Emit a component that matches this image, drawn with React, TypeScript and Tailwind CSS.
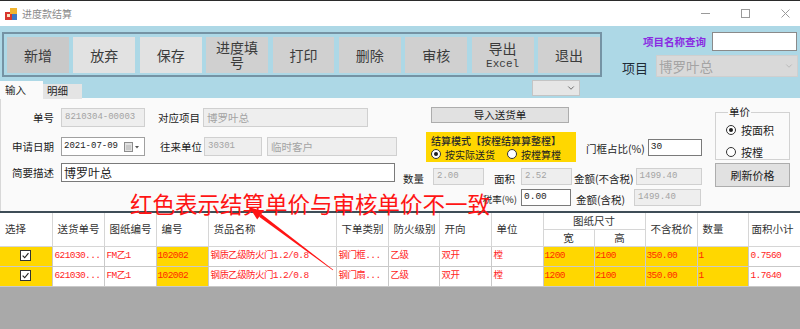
import { ChevronDown } from 'lucide-react';

const mono = "font-['Liberation_Mono','Noto_Sans_CJK_SC',monospace]";

const tools = [
  { key: 'add', label: '新增', bg: 'bg-[#c9c9c9]' },
  { key: 'drop', label: '放弃', bg: 'bg-[#e2e2e2]' },
  { key: 'save', label: '保存', bg: 'bg-[#e2e2e2]' },
  { key: 'fill', label: '进度填|号', bg: 'bg-[#d0d0d0]' },
  { key: 'print', label: '打印', bg: 'bg-[#d0d0d0]' },
  { key: 'del', label: '删除', bg: 'bg-[#d0d0d0]' },
  { key: 'audit', label: '审核', bg: 'bg-[#d0d0d0]' },
  { key: 'excel', label: '导出', bg: 'bg-[#d0d0d0]', sub: 'Excel' },
  { key: 'exit', label: '退出', bg: 'bg-[#d0d0d0]' }
];

type Cell = { text: string; yellow?: boolean; check?: boolean };

const rows: Cell[][] = [
  [
    { text: '', yellow: true, check: true },
    { text: '621030...' },
    { text: 'FM乙1' },
    { text: '102002', yellow: true },
    { text: '钢质乙级防火门1.2/0.8' },
    { text: '钢门框...' },
    { text: '乙级' },
    { text: '双开' },
    { text: '樘' },
    { text: '1200', yellow: true },
    { text: '2100', yellow: true },
    { text: '350.00', yellow: true },
    { text: '1', yellow: true },
    { text: '0.7560' }
  ],
  [
    { text: '', yellow: true, check: true },
    { text: '621030...' },
    { text: 'FM乙1' },
    { text: '102002', yellow: true },
    { text: '钢质乙级防火门1.2/0.8' },
    { text: '钢门扇...' },
    { text: '乙级' },
    { text: '双开' },
    { text: '樘' },
    { text: '1200', yellow: true },
    { text: '2100', yellow: true },
    { text: '350.00', yellow: true },
    { text: '1', yellow: true },
    { text: '1.7640' }
  ]
];

const headLeft = ['选择', '送货单号', '图纸编号', '编号', '货品名称', '下单类别', '防火级别', '开向', '单位'];

function AppIcon() {
  return (
    <svg width="12" height="12" viewBox="0 0 12 12">
      <rect x="0" y="4" width="7" height="8" fill="#d8352c" />
      <rect x="5" y="0" width="7" height="6" fill="#f1b42f" />
      <rect x="7" y="6" width="5" height="6" fill="#3c78c6" />
      <rect x="2" y="6" width="3" height="3" fill="#fbe3c0" />
    </svg>
  );
}

function Radio({ on }: { on?: boolean }) {
  return (
    <span className="flex h-[10px] w-[10px] shrink-0 items-center justify-center rounded-full border border-[#333] bg-white">
      {on && <span className="h-[4px] w-[4px] rounded-full bg-[#1e1e1e]" />}
    </span>
  );
}

function CheckBox() {
  return (
    <span className="inline-flex h-[11px] w-[11px] items-center justify-center border border-[#333] bg-white align-middle">
      <svg viewBox="0 0 10 10" className="h-[9px] w-[9px]">
        <path d="M1.8 5.2 L4.1 7.5 L8.3 2.4" fill="none" stroke="#222" strokeWidth="1.3" />
      </svg>
    </span>
  );
}

function ReadOnly({ className, children, monoText }: { className: string; children: string; monoText?: boolean }) {
  return (
    <div
      className={`flex h-[19px] items-center border border-[#d0d0d0] bg-[#eeeeee] pl-[3px] text-[#a3a3a3] ${
        monoText ? `${mono} text-[9px]` : 'text-[10.5px]'
      } ${className}`}
    >
      {children}
    </div>
  );
}

export default function App() {
  return (
    <div className="relative h-[329px] w-[800px] overflow-hidden bg-white font-['Noto_Sans_CJK_SC',sans-serif] text-[#222]">
      {/* title bar */}
      <div className="flex h-[26px] items-center border-t border-[#2b2b2b] bg-white">
        <span className="ml-[5px]">
          <AppIcon />
        </span>
        <span className="ml-[5px] text-[10px] text-[#8a8a8a]">进度款结算</span>
        <div className="ml-auto flex items-center gap-[31px] pr-[10px] text-[#9a9a9a]">
          <svg width="9" height="9">
            <path d="M0 4.5H9" stroke="currentColor" />
          </svg>
          <svg width="9" height="9">
            <rect x="0.5" y="0.5" width="8" height="8" fill="none" stroke="currentColor" />
          </svg>
          <svg width="9" height="9">
            <path d="M0.5 0.5L8.5 8.5M8.5 0.5L0.5 8.5" stroke="currentColor" />
          </svg>
        </div>
      </div>

      {/* blue header */}
      <div className="h-[72px] bg-[#add8e6]">
        <div className="flex pt-[6px]">
          <div className="ml-[2px] flex h-[45px] w-[600px] gap-[4.4px] border-2 border-[#7593a4] pl-[3px] pt-[3px]">
            {tools.map((tool) => (
              <div
                key={tool.key}
                className={`flex h-[36px] w-[62px] flex-col items-center justify-center text-[14px] leading-[15px] text-[#3b3b3b] ${tool.bg}`}
              >
                {tool.label.split('|').map((part) => (
                  <span key={part}>{part}</span>
                ))}
                {tool.sub && <span className={`${mono} mt-[2px] text-[11px] leading-[12px]`}>{tool.sub}</span>}
              </div>
            ))}
          </div>
          <div className="ml-[20px] flex w-[176px] flex-col">
            <div className="flex h-[19px] items-center">
              <span className="ml-[21px] text-[10.5px] font-bold text-[#8a2be2]">项目名称查询</span>
              <div className="ml-[6px] h-[19px] w-[85px] border border-[#8a8a8a] bg-white" />
            </div>
            <div className="mt-[4px] flex items-center">
              <span className="pt-[3px] text-[13px] text-[#1d2a36]">项目</span>
              <div className="ml-[8px] flex h-[22px] w-[142px] items-center border border-[#cfcfcf] bg-[#d9d9d9] pl-[2px] text-[13.5px] text-[#a4a4a4]">
                博罗叶总
                <ChevronDown size={10} className="ml-auto mr-[3px] text-[#b5b5b5]" />
              </div>
            </div>
          </div>
        </div>
        <div className="flex h-[21px] items-end">
          <div className="flex h-[18px] w-[43px] items-center bg-[#fafafa] pl-[5px] text-[10.5px]">输入</div>
          <div className="flex h-[15px] w-[39px] items-center bg-[#e4e4e4] pl-[4px] text-[10.5px]">明细</div>
          <div className="mb-[2px] ml-[450px] mt-[2px] flex h-[16px] w-[48px] items-center self-start border border-[#c4c4c4] bg-[#e6e6e6]">
            <ChevronDown size={10} className="ml-auto mr-[3px] text-[#555]" />
          </div>
        </div>
      </div>

      {/* form */}
      <div className="flex h-[113px] border-l border-[#d8d8d8] bg-[#fafafa] text-[10.5px]">
        <div className="flex w-[399px] flex-col pt-[10px]">
          <div className="flex h-[19px] items-center">
            <span className="w-[53px] text-right">单号</span>
            <ReadOnly className="ml-[7px] w-[84px]" monoText>
              8210304-00003
            </ReadOnly>
            <span className="ml-[13px] w-[42px]">对应项目</span>
            <ReadOnly className="ml-[3px] w-[165px]">博罗叶总</ReadOnly>
          </div>
          <div className="mt-[10px] flex h-[19px] items-center">
            <span className="w-[53px] text-right">申请日期</span>
            <div className="ml-[7px] flex h-[19px] w-[84px] items-center border border-[#a0a0a0] bg-white pl-[2px]">
              <span className={`${mono} text-[9px] text-[#222]`}>2021-07-09</span>
              <svg width="16" height="10" viewBox="0 0 16 10" className="ml-auto mr-[4px]">
                <rect x="0.5" y="0.5" width="8" height="9" fill="#e2e2e2" stroke="#8c8c8c" />
                <rect x="2" y="3" width="5" height="5" fill="#c9c9c9" />
                <path d="M11 4 L15 4 L13 6.5 Z" fill="#555" />
              </svg>
            </div>
            <span className="ml-[15px] w-[42px]">往来单位</span>
            <ReadOnly className="ml-[2px] w-[58px]" monoText>
              30301
            </ReadOnly>
            <ReadOnly className="ml-[5px] w-[130px]">临时客户</ReadOnly>
          </div>
          <div className="mt-[7px] flex h-[19px] items-center">
            <span className="w-[53px] text-right">简要描述</span>
            <div className="ml-[7px] flex h-[19px] w-[334px] items-center border border-[#7a7a7a] bg-white pl-[2px] text-[12px]">
              博罗叶总
            </div>
          </div>
        </div>

        <div className="flex w-[311px] flex-col">
          <div className="ml-[31px] mt-[9px] flex h-[16px] w-[138px] items-center justify-center border border-[#adadad] bg-[#e1e1e1]">
            导入送货单
          </div>
          <div className="mt-[9px] flex items-center">
            <div className="ml-[26px] flex h-[30px] w-[150px] flex-col justify-center bg-[#ffd700] pl-[5px] text-[10px] leading-[13px]">
              <span className="font-medium text-[#2a2a2a]">结算模式【按樘结算算整樘】</span>
              <div className="mt-[1px] flex items-center">
                <Radio on />
                <span className="ml-[4px]">按实际送货</span>
                <span className="ml-[12px]">
                  <Radio />
                </span>
                <span className="ml-[4px]">按樘算樘</span>
              </div>
            </div>
            <span className="ml-[10px] pt-[4px]">门框占比(%)</span>
            <div className={`ml-[3px] flex h-[17px] w-[54px] items-center border border-[#7a7a7a] bg-white pl-[2px] ${mono} text-[9.5px]`}>
              30
            </div>
          </div>
          <div className="mt-[6px] flex h-[17px] items-center">
            <span className="ml-[3px] pt-[5px]">数量</span>
            <ReadOnly className="ml-[9px] !h-[17px] w-[51px]" monoText>
              2.00
            </ReadOnly>
            <span className="ml-[10px] pt-[5px]">面积</span>
            <ReadOnly className="ml-[6px] !h-[17px] w-[51px]" monoText>
              2.52
            </ReadOnly>
            <span className="ml-[2px] pt-[4px]">金额(不含税)</span>
            <ReadOnly className="ml-[2px] !h-[17px] w-[66px]" monoText>
              1499.40
            </ReadOnly>
          </div>
          <div className="mt-[4px] flex h-[17px] items-center">
            <span className="w-[117px] pt-[3px] text-right text-[9.5px]">税率(%)</span>
            <div className={`ml-[4px] flex h-[17px] w-[50px] items-center border border-[#7a7a7a] bg-white pl-[2px] ${mono} text-[9.5px]`}>
              0.00
            </div>
            <span className="ml-[5px] pt-[4px]">金额(含税)</span>
            <ReadOnly className="ml-[9px] !h-[17px] w-[67px]" monoText>
              1499.40
            </ReadOnly>
          </div>
        </div>

        <div className="ml-[4px] flex w-[75px] flex-col">
          <fieldset className="mt-[7px] h-[55px] border border-[#d2d2d2] pl-[10px]">
            <legend className="ml-[2px] px-[1px] text-[10.5px] leading-[14px]">单价</legend>
            <div className="mt-[3px] flex items-center">
              <Radio on />
              <span className="ml-[5px] text-[11px]">按面积</span>
            </div>
            <div className="mt-[5px] flex items-center">
              <Radio />
              <span className="ml-[5px] text-[11px]">按樘</span>
            </div>
          </fieldset>
          <div className="mt-[3px] flex h-[24px] items-center justify-center border border-[#adadad] bg-[#e1e1e1] text-[11px]">
            刷新价格
          </div>
        </div>
      </div>

      {/* grid */}
      <div className="flex h-[118px] flex-col border-t-2 border-[#3e4d57] bg-[#a9a9a9]">
        <table className="w-[800px] table-fixed border-collapse">
          <colgroup>
            <col className="w-[52px]" />
            <col className="w-[52px]" />
            <col className="w-[52px]" />
            <col className="w-[52px]" />
            <col className="w-[128px]" />
            <col className="w-[52px]" />
            <col className="w-[51px]" />
            <col className="w-[52px]" />
            <col className="w-[52px]" />
            <col className="w-[51px]" />
            <col className="w-[51px]" />
            <col className="w-[52px]" />
            <col className="w-[51px]" />
            <col className="w-[52px]" />
          </colgroup>
          <thead className="bg-white text-[10.5px] text-[#333]">
            <tr className="h-[16px]">
              {headLeft.map((head) => (
                <th
                  key={head}
                  rowSpan={2}
                  className="border-b border-r border-[#d6d6d6] pl-[5px] text-left font-normal"
                >
                  {head}
                </th>
              ))}
              <th colSpan={2} className="border-b border-r border-[#d6d6d6] text-center font-normal leading-[15px]">
                图纸尺寸
              </th>
              <th rowSpan={2} className="border-b border-r border-[#d6d6d6] pl-[5px] text-left font-normal">
                不含税价
              </th>
              <th rowSpan={2} className="border-b border-r border-[#d6d6d6] pl-[5px] text-left font-normal">
                数量
              </th>
              <th rowSpan={2} className="border-b border-[#d6d6d6] pl-[3px] text-left font-normal">
                面积小计
              </th>
            </tr>
            <tr className="h-[17px]">
              <th className="border-b border-r border-[#d6d6d6] text-center font-normal leading-[15px]">宽</th>
              <th className="border-b border-r border-[#d6d6d6] text-center font-normal leading-[15px]">高</th>
            </tr>
          </thead>
          <tbody className={`${mono} text-[9.5px] tracking-[-0.6px]`}>
            {rows.map((row, r) => (
              <tr key={r} className="h-[20px]">
                {row.map((cell, c) => (
                  <td
                    key={c}
                    className={`overflow-hidden whitespace-nowrap border-b border-r border-[#c9c9c9] ${
                      cell.yellow ? 'bg-[#ffd700] px-[1px] text-[#ff2a00]' : 'bg-white px-[2px] text-[#ff1e1e]'
                    } ${cell.check ? 'text-center' : ''}`}
                  >
                    {cell.check ? <CheckBox /> : cell.text}
                  </td>
                ))}
              </tr>
            ))}
          </tbody>
        </table>
      </div>

      {/* red annotation over the window */}
      <span className="pointer-events-none absolute left-[130px] top-[192px] whitespace-nowrap text-[22.5px] leading-none text-[#ff1414]">
        红色表示结算单价与审核单价不一致
      </span>
      <svg className="pointer-events-none absolute left-0 top-0" width="800" height="329">
        <polygon points="249,207 263.2,211.4 257.2,219.4" fill="#ff1414" />
        <polygon points="261.3,214 333.2,269.8 332.8,270.2 259.1,216.8" fill="#ff1414" />
      </svg>
    </div>
  );
}
